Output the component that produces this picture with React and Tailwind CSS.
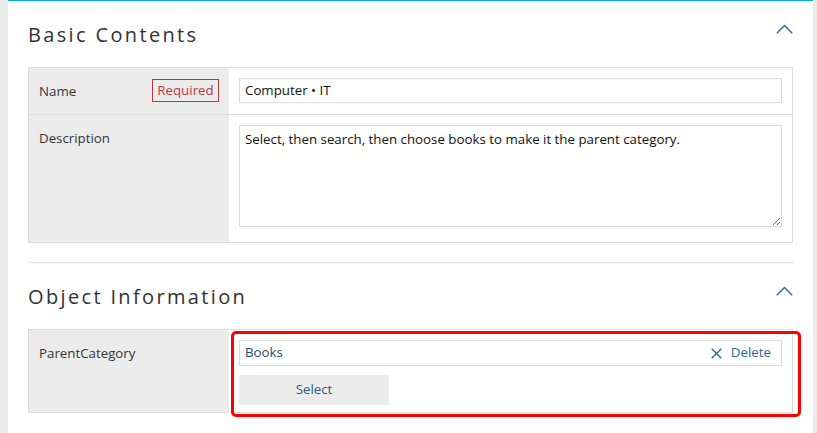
import React from "react";

function Chevron() {
  return (
    <svg width="17" height="10" viewBox="0 0 17 10" className="block">
      <path d="M0.8 9.2 L8.5 1.5 L16.2 9.2" fill="none" stroke="#1f6d9c" strokeWidth="1.4" />
    </svg>
  );
}

function SectionHeader({ title }) {
  return (
    <div className="flex items-start justify-between h-[66px]">
      <h2 className="pt-[19px] text-[20px] leading-[30px] tracking-[2.35px] font-normal text-[#333]">{title}</h2>
      <div className="pt-[23px]">
        <Chevron />
      </div>
    </div>
  );
}

export default function App() {
  return (
    <div
      className="flex min-h-[433px] bg-[#ececec]"
      style={{ fontFamily: '"Open Sans", "Noto Sans", sans-serif' }}
    >
      <div className="ml-2 w-[805px] bg-white border-t border-[#0aa6ea]">
        <div className="px-5">
          {/* Section 1 */}
          <SectionHeader title="Basic Contents" />
          <div className="border border-[#dcdcdc] text-[13.3px] text-[#333]">
            <div className="flex border-b border-[#dcdcdc]">
              <div className="w-[200px] shrink-0 bg-[#ececec] flex items-start justify-between pl-[10px] pr-[10px] pt-[11px]">
                <span className="leading-[20px] pt-[2px]">Name</span>
                <span className="h-[23px] w-[67px] border border-[#c0353a] text-[#c0353a] flex items-center justify-center leading-none">
                  Required
                </span>
              </div>
              <div className="flex-1 px-[10px] pt-[10px] pb-[11px]">
                <div className="h-[25px] border border-[#dcdcdc] flex items-center px-[5px] text-[#111]">
                  Computer • IT
                </div>
              </div>
            </div>
            <div className="flex">
              <div className="w-[200px] shrink-0 bg-[#ececec] pl-[10px] pt-[13px]">
                <span className="leading-[20px]">Description</span>
              </div>
              <div className="flex-1 px-[10px] pt-[10px] pb-[15px]">
                <textarea
                  readOnly
                  defaultValue="Select, then search, then choose books to make it the parent category."
                  className="block w-full h-[102px] border border-[#dcdcdc] px-[5px] pt-[3px] leading-[20px] text-[13.3px] text-[#111] outline-none resize-y"
                />
              </div>
            </div>
          </div>
        </div>

        {/* Section 2 */}
        <div className="mx-5 mt-[19px] border-t border-[#dcdcdc]">
          <SectionHeader title="Object Information" />
          <div className="relative border border-[#dcdcdc] text-[13.3px] text-[#333] flex">
            <div className="w-[200px] shrink-0 bg-[#ececec] pl-[10px] pt-[13px]">
              <span className="leading-[20px]">ParentCategory</span>
            </div>
            <div className="flex-1 px-[10px] pt-[10px] pb-[7px] flex flex-col gap-[9px]">
              <div className="h-[26px] border border-[#dcdcdc] flex items-center justify-between pl-[5px] pr-[10px]">
                <span className="text-[#1d4f72]">Books</span>
                <span className="flex items-center gap-[9px] text-[#1f6a9a]">
                  <svg width="11" height="11" viewBox="0 0 11 11">
                    <path d="M0.7 0.7 L10.3 10.3 M10.3 0.7 L0.7 10.3" stroke="#1f6a9a" strokeWidth="1.3" />
                  </svg>
                  Delete
                </span>
              </div>
              <div className="w-[150px] h-[30px] bg-[#ececec] flex items-center justify-center text-[#2a5a7e]">
                Select
              </div>
            </div>
            <div className="absolute left-[202px] top-px w-[570px] h-[86px] border-[3px] border-[#ff0000] rounded-[5px] pointer-events-none" />
          </div>
        </div>
      </div>
    </div>
  );
}
